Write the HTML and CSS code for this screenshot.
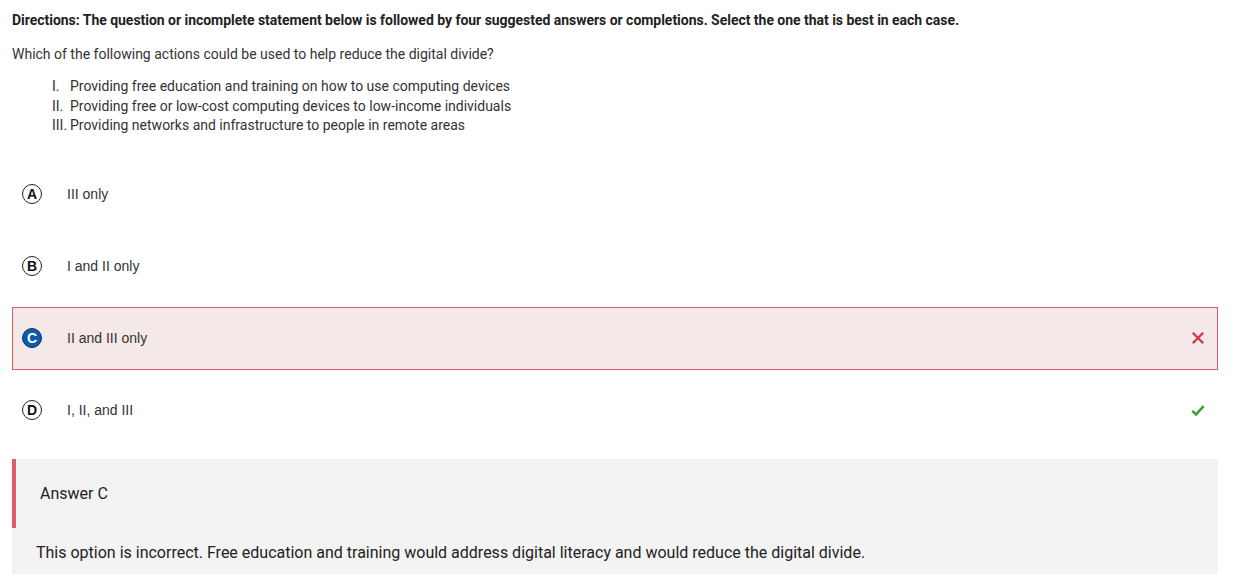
FILE: index.html
```html
<!DOCTYPE html>
<html>
<head>
<meta charset="utf-8">
<link rel="stylesheet" href="styles.css">
</head>
<body>
<div class="page">
  <p class="directions">Directions: The question or incomplete statement below is followed by four suggested answers or completions. Select the one that is best in each case.</p>
  <p class="question">Which of the following actions could be used to help reduce the digital divide?</p>
  <ol class="items">
    <li><span class="num">I.</span><span>Providing free education and training on how to use computing devices</span></li>
    <li><span class="num">II.</span><span>Providing free or low-cost computing devices to low-income individuals</span></li>
    <li><span class="num">III.</span><span>Providing networks and infrastructure to people in remote areas</span></li>
  </ol>
  <div class="options">
    <div class="option">
      <span class="badge">A</span><span class="otext">III only</span>
    </div>
    <div class="option">
      <span class="badge">B</span><span class="otext">I and II only</span>
    </div>
    <div class="option selected">
      <span class="badge filled">C</span><span class="otext">II and III only</span>
      <svg class="mark" width="14" height="14" viewBox="0 0 14 14"><path d="M1.8 1.8 L12.2 12.2 M12.2 1.8 L1.8 12.2" stroke="#d1344c" stroke-width="2.3" fill="none"/></svg>
    </div>
    <div class="option">
      <span class="badge">D</span><span class="otext">I, II, and III</span>
      <svg class="mark" width="14" height="14" viewBox="0 0 14 14"><path d="M1.3 7.8 L5 11.4 L12.7 3.2" stroke="#3f9a3c" stroke-width="2.5" fill="none"/></svg>
    </div>
  </div>
  <div class="feedback">
    <div class="fhead">Answer C</div>
    <p class="fbody">This option is incorrect. Free education and training would address digital literacy and would reduce the digital divide.</p>
  </div>
</div>
</body>
</html>
```
FILE: styles.css
```css
html, body {
  margin: 0;
  padding: 0;
  background: #fff;
}
body {
  font-family: Roboto, "Liberation Sans", Arial, sans-serif;
  color: #333;
}
.page {
  padding: 10px 28px 0 12px;
}
.directions {
  margin: 0;
  font-size: 14px;
  line-height: 20px;
  font-weight: 700;
  letter-spacing: -0.03px;
  color: #222;
}
.question {
  margin: 14px 0 0;
  font-size: 14px;
  line-height: 20px;
  color: #333;
}
.items {
  list-style: none;
  margin: 13px 0 0;
  padding: 0 0 0 40px;
  font-size: 14px;
  line-height: 19.5px;
  color: #333;
}
.items li {
  display: flex;
}
.num {
  display: inline-block;
  min-width: 18px;
}
.options {
  margin-top: 27px;
  display: flex;
  flex-direction: column;
  gap: 9px;
}
.option {
  display: flex;
  align-items: center;
  height: 61px;
  border: 1px solid transparent;
  padding: 0 12px 0 9px;
}
.option.selected {
  background: #f5e8e8;
  border-color: #e35a6b;
}
.badge {
  width: 18px;
  height: 18px;
  flex: none;
  border: 1.5px solid #222;
  border-radius: 50%;
  display: flex;
  align-items: center;
  justify-content: center;
  font-family: "Liberation Sans", Arial, sans-serif;
  font-weight: 700;
  font-size: 14px;
  color: #111;
  line-height: 1;
}
.badge.filled {
  background: #0b5cab;
  border-color: #0a3566;
  color: #fff;
}
.otext {
  margin-left: 25px;
  font-family: "Liberation Sans", Arial, sans-serif;
  font-size: 14px;
  color: #333;
}
.mark {
  margin-left: auto;
}
.feedback {
  margin-top: 17px;
  background: #f3f3f3;
  padding-bottom: 14px;
}
.fhead {
  border-left: 4px solid #e35a6b;
  height: 69px;
  display: flex;
  align-items: center;
  padding-left: 24px;
  font-size: 16px;
  color: #222;
}
.fbody {
  margin: 15px 0 0;
  padding-left: 24px;
  font-size: 16px;
  line-height: 20px;
  color: #222;
}
```
